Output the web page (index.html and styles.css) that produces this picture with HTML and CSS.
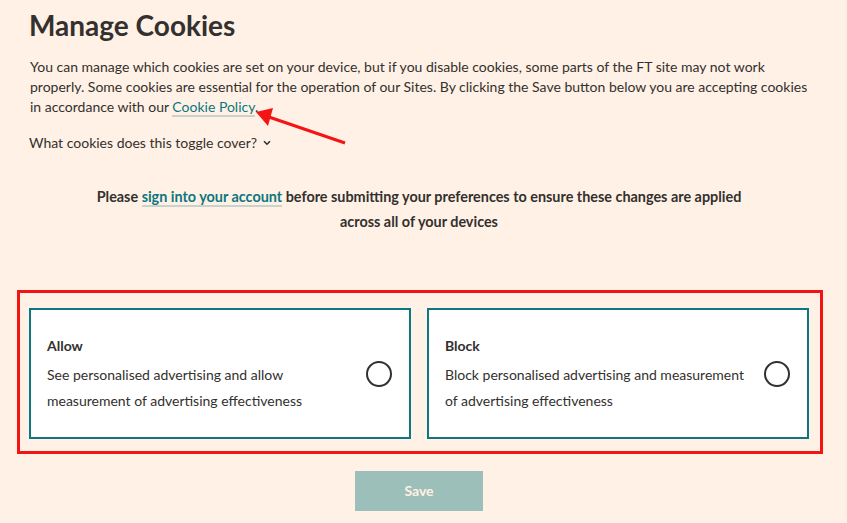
FILE: index.html
```html
<!DOCTYPE html>
<html lang="en">
<head>
<meta charset="utf-8">
<title>Manage Cookies</title>
<link rel="stylesheet" href="styles.css">
</head>
<body>
<main class="page">
  <h1 class="title">Manage Cookies</h1>
  <p class="intro">You can manage which cookies are set on your device, but if you disable cookies, some parts of the FT site may not work properly. Some cookies are essential for the operation of our Sites. By clicking the Save button below you are accepting cookies in accordance with our <a class="link" href="#">Cookie Policy</a>.</p>
  <button class="toggle" type="button">What cookies does this toggle cover?
    <svg class="chev" width="8" height="6" viewBox="0 0 8 6"><path d="M1 1.2 L4 4.2 L7 1.2" fill="none" stroke="#33302e" stroke-width="1.6"/></svg>
  </button>
  <p class="notice">Please <a class="link" href="#">sign into your account</a> before submitting your preferences to ensure these changes are applied across all of your devices</p>
  <div class="choices">
    <label class="card">
      <span class="card-text">
        <span class="card-title">Allow</span>
        <span class="card-desc">See personalised advertising and allow measurement of advertising effectiveness</span>
      </span>
      <span class="radio"></span>
    </label>
    <label class="card">
      <span class="card-text">
        <span class="card-title">Block</span>
        <span class="card-desc">Block personalised advertising and measurement of advertising effectiveness</span>
      </span>
      <span class="radio"></span>
    </label>
  </div>
  <div class="actions">
    <button class="save" type="button">Save</button>
  </div>
</main>
<div class="annot-box"></div>
<svg class="annot-arrow" width="847" height="523" viewBox="0 0 847 523">
  <line x1="345" y1="143" x2="266" y2="116" stroke="#f41414" stroke-width="3"/>
  <polygon points="256,112 273,108 268,126" fill="#f41414"/>
</svg>
</body>
</html>
```
FILE: styles.css
```css
html, body {
  margin: 0;
  padding: 0;
  background: #fff1e5;
}
body {
  font-family: Lato, "Open Sans", sans-serif;
  color: #33302e;
  font-size: 14px;
  position: relative;
  height: 523px;
  overflow: hidden;
}
.page {
  width: 780px;
  padding-left: 29px;
}
.title {
  margin: 0;
  padding: 8px 0 0 0;
  font-size: 28px;
  line-height: 34px;
  font-weight: 700;
}
.intro {
  margin: 15px 0 0 1px;
  line-height: 20px;
}
.link {
  color: #0d7680;
  text-decoration: none;
  border-bottom: 2px solid #c9d3cc;
}
.toggle {
  margin: 16px 0 0 0;
  padding: 0;
  border: 0;
  background: none;
  font: inherit;
  color: #33302e;
  line-height: 20px;
  display: flex;
  align-items: center;
  gap: 6px;
}
.notice {
  margin: 31px auto 0;
  width: 680px;
  text-align: center;
  font-weight: 700;
  font-size: 14.4px;
  line-height: 25px;
}
.choices {
  margin-top: 74px;
  display: flex;
  gap: 16px;
}
.card {
  flex: 1;
  height: 131px;
  box-sizing: border-box;
  border: 2px solid #0d7680;
  background: #fff;
  display: flex;
  align-items: center;
  gap: 12px;
  padding: 0 17px 0 16px;
}
.card-text {
  flex: 1;
  display: flex;
  flex-direction: column;
  padding-top: 3px;
}
.card-title {
  font-weight: 700;
  line-height: 20px;
  margin-bottom: 6px;
}
.card-desc {
  line-height: 26px;
}
.radio {
  width: 26px;
  height: 26px;
  box-sizing: border-box;
  border: 2px solid #33302e;
  border-radius: 50%;
  flex: none;
}
.actions {
  display: flex;
  justify-content: center;
  margin-top: 32px;
}
.save {
  width: 128px;
  height: 40px;
  padding: 0 0 2px;
  border: 0;
  background: #9dbfba;
  color: #fff1e5;
  font: inherit;
  font-weight: 700;
  font-size: 14px;
}
.annot-box {
  position: absolute;
  left: 17px;
  top: 290px;
  width: 806px;
  height: 164px;
  box-sizing: border-box;
  border: 3px solid #f41414;
  pointer-events: none;
}
.annot-arrow {
  position: absolute;
  left: 0;
  top: 0;
  pointer-events: none;
}
```
